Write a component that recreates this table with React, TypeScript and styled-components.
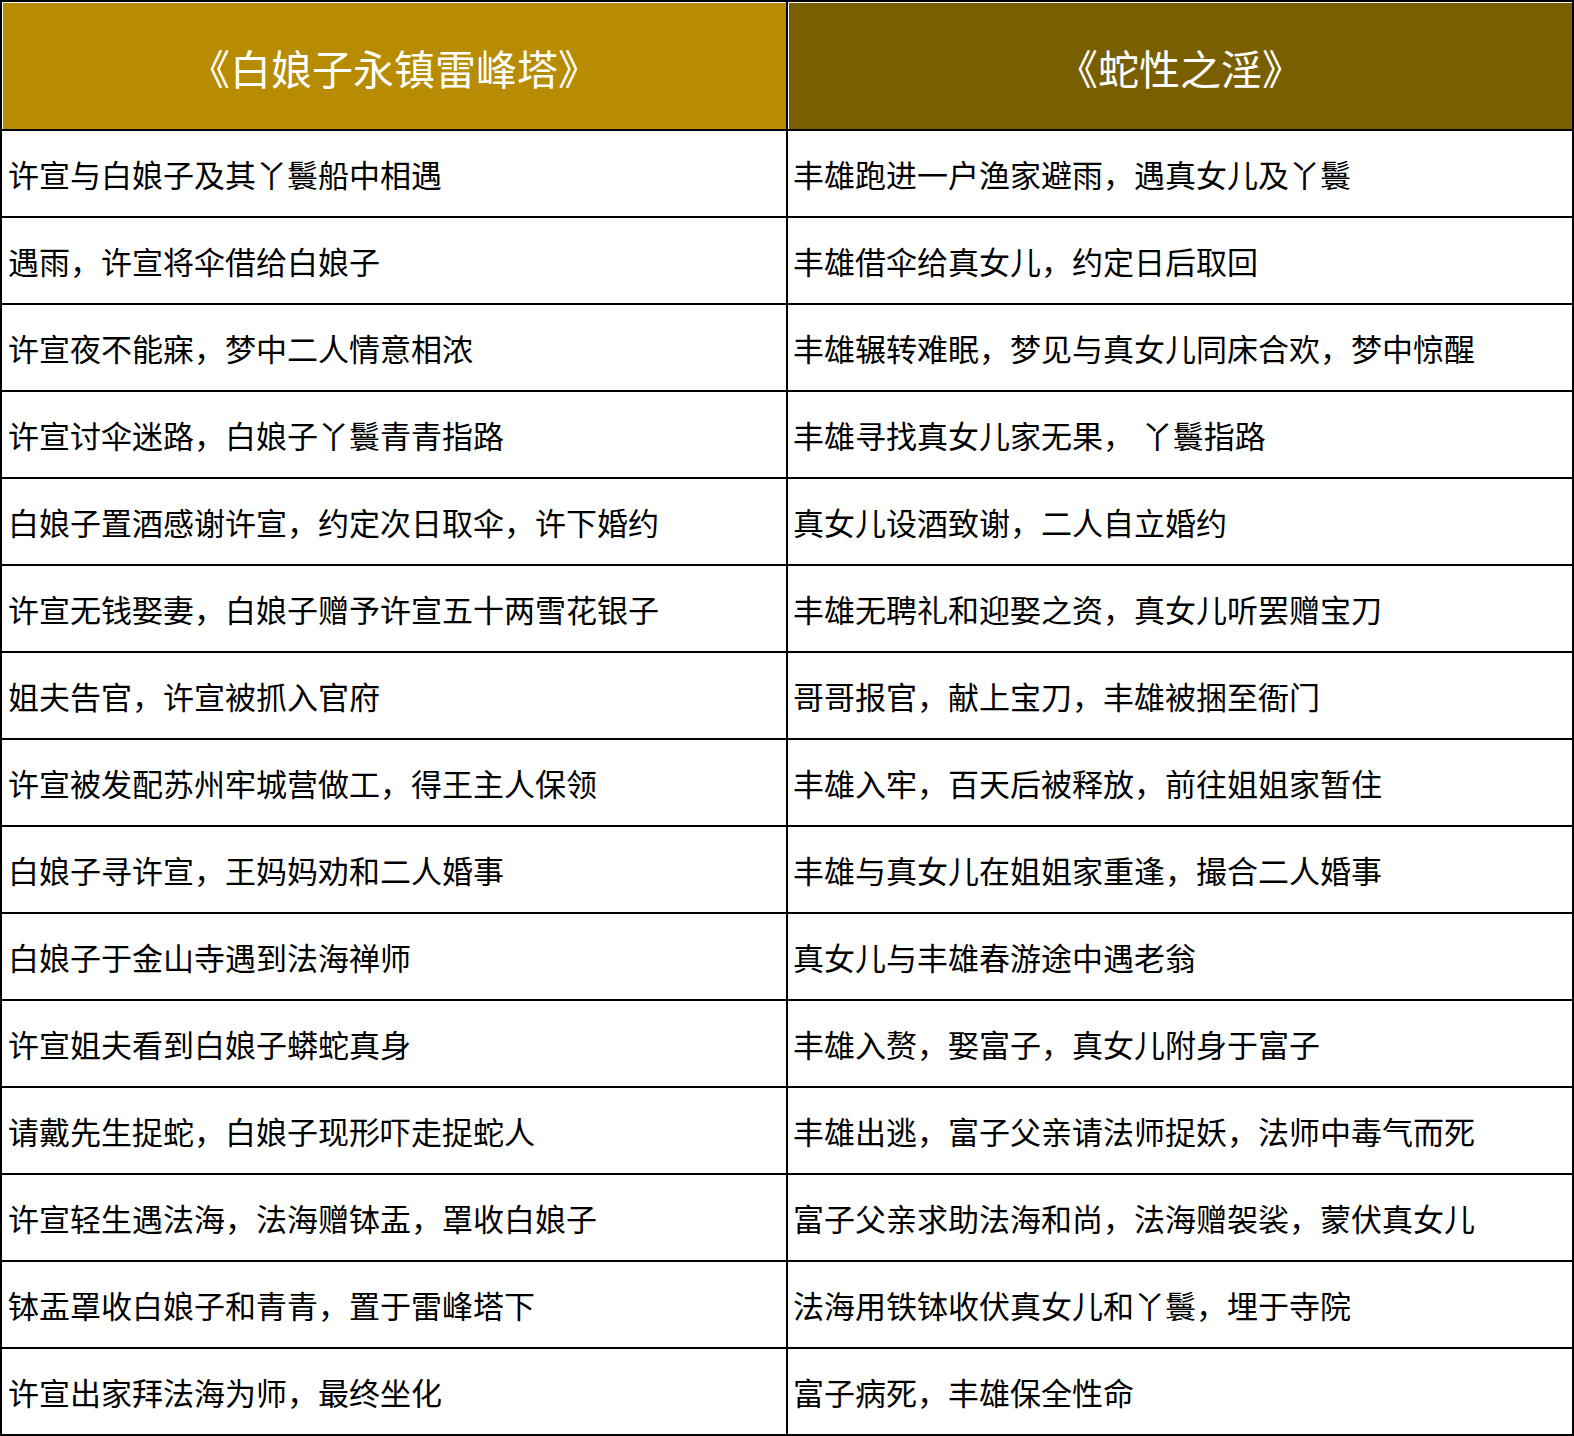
import React from "react";
import styled, { createGlobalStyle } from "styled-components";

const GlobalStyle = createGlobalStyle`
  html, body { margin: 0; padding: 0; background: #ffffff; }
  body { font-family: "Liberation Serif", "Noto Sans CJK SC", serif; }
`;

const rows: [string, string][] = [
  ["许宣与白娘子及其丫鬟船中相遇", "丰雄跑进一户渔家避雨，遇真女儿及丫鬟"],
  ["遇雨，许宣将伞借给白娘子", "丰雄借伞给真女儿，约定日后取回"],
  ["许宣夜不能寐，梦中二人情意相浓", "丰雄辗转难眠，梦见与真女儿同床合欢，梦中惊醒"],
  ["许宣讨伞迷路，白娘子丫鬟青青指路", "丰雄寻找真女儿家无果， 丫鬟指路"],
  ["白娘子置酒感谢许宣，约定次日取伞，许下婚约", "真女儿设酒致谢，二人自立婚约"],
  ["许宣无钱娶妻，白娘子赠予许宣五十两雪花银子", "丰雄无聘礼和迎娶之资，真女儿听罢赠宝刀"],
  ["姐夫告官，许宣被抓入官府", "哥哥报官，献上宝刀，丰雄被捆至衙门"],
  ["许宣被发配苏州牢城营做工，得王主人保领", "丰雄入牢，百天后被释放，前往姐姐家暂住"],
  ["白娘子寻许宣，王妈妈劝和二人婚事", "丰雄与真女儿在姐姐家重逢，撮合二人婚事"],
  ["白娘子于金山寺遇到法海禅师", "真女儿与丰雄春游途中遇老翁"],
  ["许宣姐夫看到白娘子蟒蛇真身", "丰雄入赘，娶富子，真女儿附身于富子"],
  ["请戴先生捉蛇，白娘子现形吓走捉蛇人", "丰雄出逃，富子父亲请法师捉妖，法师中毒气而死"],
  ["许宣轻生遇法海，法海赠钵盂，罩收白娘子", "富子父亲求助法海和尚，法海赠袈裟，蒙伏真女儿"],
  ["钵盂罩收白娘子和青青，置于雷峰塔下", "法海用铁钵收伏真女儿和丫鬟，埋于寺院"],
  ["许宣出家拜法海为师，最终坐化", "富子病死，丰雄保全性命"],
];

const Table = styled.div`
  width: 1574px;
  box-sizing: border-box;
  border: 2px solid #000000;
  background: #000000;
  display: grid;
  grid-template-columns: 784px 784px;
  column-gap: 2px;
  row-gap: 2px;
  grid-template-rows: 127px;
  grid-auto-rows: 85px;
`;

const HeadCell = styled.div<{ $tone: "gold" | "dark" }>`
  background: ${(p) => (p.$tone === "gold" ? "#b88c02" : "#7a5f00")};
  color: #ffffff;
  display: flex;
  align-items: center;
  justify-content: center;
  font-family: "Liberation Serif", "Noto Sans CJK SC", serif;
  font-size: 41px;
  font-weight: 400;
  padding-top: 2px;
  box-sizing: border-box;
  box-shadow: inset 1px 1px 0 #ffffff;
`;

const Cell = styled.div<{ $side: "left" | "right" }>`
  background: #ffffff;
  color: #000000;
  display: flex;
  align-items: center;
  padding-left: ${(p) => (p.$side === "left" ? "6px" : "5px")};
  font-family: "Liberation Serif", "Noto Sans CJK SC", serif;
  font-size: 31px;
  white-space: nowrap;
  box-sizing: border-box;
`;

export default function App() {
  return (
    <>
      <GlobalStyle />
      <Table>
        <HeadCell $tone="gold">《白娘子永镇雷峰塔》</HeadCell>
        <HeadCell $tone="dark">《蛇性之淫》</HeadCell>
        {rows.map(([a, b], i) => (
          <React.Fragment key={i}>
            <Cell $side="left">{a}</Cell>
            <Cell $side="right">{b}</Cell>
          </React.Fragment>
        ))}
      </Table>
    </>
  );
}
